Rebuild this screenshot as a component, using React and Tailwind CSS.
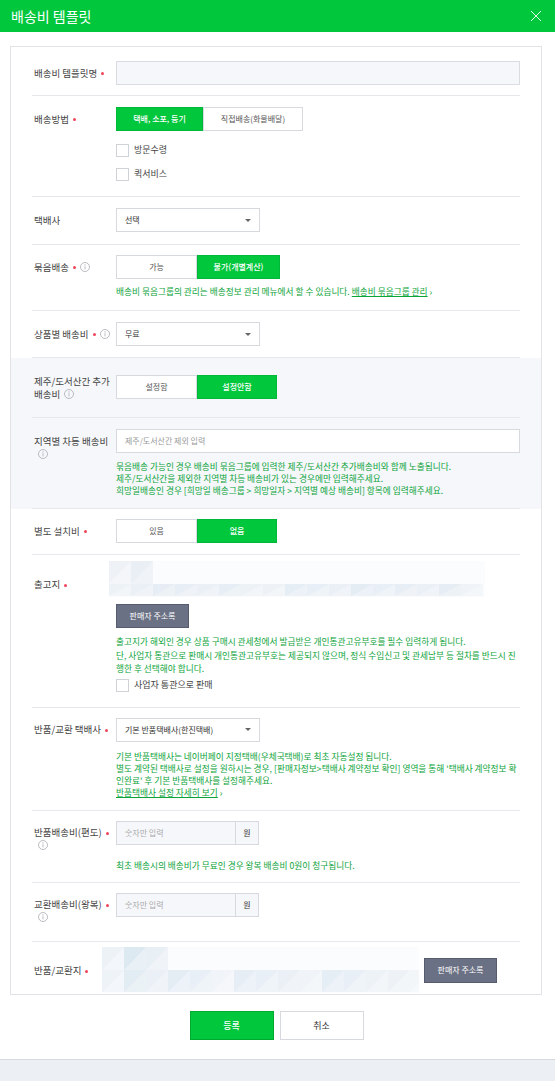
import React from 'react';

const FONT = { fontFamily: '"Noto Sans CJK KR", "Noto Sans", sans-serif' };

const Dot = () => (
  <span className="ml-[4px] inline-block h-[3px] w-[3px] rounded-full bg-[#f0445a] align-middle" />
);

const Info = () => (
  <svg width="10" height="10" viewBox="0 0 10 10" className="ml-[4px] inline-block align-[-1px]">
    <circle cx="5" cy="5" r="4.5" fill="none" stroke="#a9acb2" strokeWidth="0.8" />
    <rect x="4.6" y="4.2" width="0.8" height="3.2" fill="#a9acb2" />
    <circle cx="5" cy="2.9" r="0.55" fill="#a9acb2" />
  </svg>
);

const Row = ({ label, labelClass = 'pt-[5.5px]', className = '', border = true, children }) => (
  <div className={`flex ${border ? 'border-b border-[#e6e8eb]' : ''} ${className}`}>
    <div className={`w-[84px] shrink-0 pl-[2px] text-[9.5px] leading-[13px] text-[#444] ${labelClass}`}>{label}</div>
    <div className="min-w-0 flex-1">{children}</div>
  </div>
);

const Seg = ({ items, active, widths }) => (
  <div className="flex">
    {items.map((t, i) => (
      <div
        key={t}
        style={{ width: widths[i] }}
        className={
          i === active
            ? 'flex h-[24px] items-center justify-center border border-[#00b837] bg-[#00c73c] text-[8px] font-medium text-white'
            : 'flex h-[24px] items-center justify-center border border-[#d6d9de] bg-white text-[8px] text-[#555]'
        }
      >
        {t}
      </div>
    ))}
  </div>
);

const Select = ({ value }) => (
  <div className="flex h-[24px] w-[144px] items-center justify-between border border-[#d6d9de] bg-white pl-[8px] pr-[8px] text-[8px] text-[#333]">
    <span>{value}</span>
    <svg width="6" height="3" viewBox="0 0 6 3">
      <path d="M0 0H6L3 3Z" fill="#666" />
    </svg>
  </div>
);

const Check = ({ label }) => (
  <div className="flex items-center gap-[5px] text-[9px] text-[#444]">
    <span className="h-[13px] w-[13px] border border-[#cfd2d7] bg-white" />
    <span>{label}</span>
  </div>
);

const Note = ({ children, className = '' }) => (
  <div className={`text-[8.7px] leading-[12px] text-[#0ca43a] ${className}`}>{children}</div>
);

const Mosaic = ({ w, h, top, bottom, topH }) => (
  <svg width={w} height={h} viewBox={`0 0 ${w} ${h}`} className="block">
    <rect x="0" y="0" width={w} height={h} fill="#fbfcfd" />
    {top.map((c, i) => (
      <g key={'t' + i}>
        <rect x={i * 22} y="0" width="22" height={topH} fill={c} />
        <polygon points={`${i * 22},${topH} ${i * 22 + 22},0 ${i * 22 + 22},${topH}`} fill="#ffffff" opacity="0.35" />
      </g>
    ))}
    {bottom.map((c, i) => (
      <g key={'b' + i}>
        <rect x={i * 22} y={topH} width="22" height={h - topH - 1} fill={c} />
        <polygon points={`${i * 22},${h - 1} ${i * 22 + 22},${topH} ${i * 22 + 22},${h - 1}`} fill="#ffffff" opacity="0.3" />
      </g>
    ))}
  </svg>
);

const AddrBtn = () => (
  <div className="flex h-[25px] w-[73px] items-center justify-center border border-[#565c6c] bg-[#6b7184] text-[8px] text-white">
    판매자 주소록
  </div>
);

const MoneyInput = () => (
  <div className="flex">
    <div className="flex h-[24px] w-[120px] items-center border border-[#d6d9de] bg-[#f6f7fa] pl-[8px] text-[8px] text-[#aaa]">
      숫자만 입력
    </div>
    <div className="flex h-[24px] w-[23px] items-center justify-center border border-l-0 border-[#d6d9de] bg-[#f6f7fa] text-[8px] text-[#333]">
      원
    </div>
  </div>
);

export default function App() {
  return (
    <div className="relative min-h-[1081px] w-[555px] bg-white" style={FONT}>
      {/* header */}
      <div className="flex h-[32px] items-center justify-between bg-[#00c73c] pl-[11px] pr-[14px]">
        <span className="text-[14px] text-white">배송비 템플릿</span>
        <svg width="10" height="10" viewBox="0 0 10 10">
          <path d="M0 0L10 10M10 0L0 10" stroke="#fff" strokeWidth="0.9" />
        </svg>
      </div>

      {/* panel */}
      <div className="ml-[10px] mt-[14px] w-[532px] border border-[#e1e3e7]">
        <div className="px-[21px]">
          <Row label={<>배송비 템플릿명<Dot /></>} className="pt-[14px] pb-[10px]">
            <div className="h-[24px] border border-[#d9dce1] bg-[#f6f7fa]" />
          </Row>

          <Row label={<>배송방법<Dot /></>} className="pt-[11px] pb-[10px]">
            <Seg items={['택배, 소포, 등기', '직접배송(화물배달)']} active={0} widths={[87, 100]} />
            <div className="mt-[7px] flex h-[24px] items-center">
              <Check label="방문수령" />
            </div>
            <div className="flex h-[24px] items-center">
              <Check label="퀵서비스" />
            </div>
          </Row>

          <Row label="택배사" className="pt-[11px] pb-[12px]">
            <Select value="선택" />
          </Row>

          <Row label={<>묶음배송<Dot /><Info /></>} className="pt-[10px] pb-[12px]">
            <Seg items={['가능', '불가(개별계산)']} active={1} widths={[81, 83]} />
            <Note className="mt-[7px]">
              배송비 묶음그룹의 관리는 배송정보 관리 메뉴에서 할 수 있습니다.{' '}
              <span className="underline">배송비 묶음그룹 관리</span> ›
            </Note>
          </Row>

          <Row label={<>상품별 배송비<Dot /><Info /></>} className="pt-[11px] pb-[11px]">
            <Select value="무료" />
          </Row>
        </div>

        <div className="bg-[#f5f7fa] px-[21px]">
          <Row
            label={<>제주/도서산간 추가<br />배송비<Info /></>}
            labelClass="pt-[0px]"
            className="pt-[17px] pb-[16px]"
          >
            <Seg items={['설정함', '설정안함']} active={1} widths={[81, 80]} />
          </Row>

          <Row label={<>지역별 차등 배송비<br /><Info /></>} className="pt-[11px] pb-[11px]">
            <div className="flex h-[24px] items-center border border-[#d6d9de] bg-white pl-[8px] text-[8px] text-[#999]">
              제주/도서산간 제외 입력
            </div>
            <div className="mt-[8px]">
              <Note>묶음배송 가능인 경우 배송비 묶음그룹에 입력한 제주/도서산간 추가배송비와 함께 노출됩니다.</Note>
              <Note>제주/도서산간을 제외한 지역별 차등 배송비가 있는 경우에만 입력해주세요.</Note>
              <Note>희망일배송인 경우 [희망일 배송그룹 &gt; 희망일자 &gt; 지역별 예상 배송비] 항목에 입력해주세요.</Note>
            </div>
          </Row>
        </div>

        <div className="px-[21px]">
          <Row label={<>별도 설치비<Dot /></>} className="pt-[10px] pb-[11px]">
            <Seg items={['있음', '없음']} active={1} widths={[81, 80]} />
          </Row>

          <Row label={<>출고지<Dot /></>} labelClass="pt-[17px]" className="pt-[6px] pb-[12px]">
            <div className="ml-[-7px]">
              <Mosaic
                w={376}
                h={36}
                topH={23}
                top={['#eef2f7', '#e9eff5']}
                bottom={['#edf2f7', '#eaf0f6', '#e6edf4', '#e8eef5', '#eaf0f6', '#e7eef5', '#edf2f7', '#eef2f6', '#e5edf5', '#e8eff6', '#eaf0f6', '#e4ecf4', '#e9eff6', '#e8eef5', '#eaf0f6', '#e6edf4', '#f0f4f8']}
              />
            </div>
            <div className="mt-[7px] flex">
              <div className="flex h-[24px] w-[73px] items-center justify-center border border-[#565c6c] bg-[#6b7184] text-[8px] text-white">
                판매자 주소록
              </div>
            </div>
            <div className="mt-[7px]">
              <Note className="leading-[13.5px]">출고지가 해외인 경우 상품 구매시 관세청에서 발급받은 개인통관고유부호를 필수 입력하게 됩니다.</Note>
              <Note className="leading-[13.5px]">단, 사업자 통관으로 판매시 개인통관고유부호는 제공되지 않으며, 정식 수입신고 및 관세납부 등 절차를 반드시 진행한 후 선택해야 합니다.</Note>
            </div>
            <div className="flex h-[19px] items-center">
              <Check label="사업자 통관으로 판매" />
            </div>
          </Row>

          <Row label={<>반품/교환 택배사<Dot /></>} className="pt-[10px] pb-[11px]">
            <Select value="기본 반품택배사(한진택배)" />
            <div className="mt-[9px]">
              <Note className="leading-[12.5px]">기본 반품택배사는 네이버페이 지정택배(우체국택배)로 최초 자동설정 됩니다.</Note>
              <Note className="leading-[12.5px]">별도 계약된 택배사로 설정을 원하시는 경우, [판매자정보&gt;택배사 계약정보 확인] 영역을 통해 '택배사 계약정보 확인완료' 후 기본 반품택배사를 설정해주세요.</Note>
              <Note className="leading-[12.5px]"><span className="underline">반품택배사 설정 자세히 보기</span> ›</Note>
            </div>
          </Row>

          <Row label={<>반품배송비(편도)<Dot /><br /><Info /></>} className="pt-[10px] pb-[10px]">
            <MoneyInput />
            <Note className="mt-[15px]">최초 배송시의 배송비가 무료인 경우 왕복 배송비 0원이 청구됩니다.</Note>
          </Row>

          <Row label={<>교환배송비(왕복)<Dot /><br /><Info /></>} className="pt-[10px] pb-[17px]">
            <MoneyInput />
          </Row>

          <Row label={<>반품/교환지<Dot /></>} labelClass="pt-[17px]" border={false} className="pt-[5px] pb-[1px]">
            <div className="ml-[-14px] flex items-center gap-[5px]">
              <Mosaic
                w={317}
                h={46}
                topH={23}
                top={['#edf2f7', '#dde9f1', '#e8eff5']}
                bottom={['#eef3f8', '#e2ecf3', '#eaf0f6', '#e4ecf4', '#e9eff6', '#f1f4f8', '#e6edf5', '#e8eff6', '#eaf0f6', '#f0f4f8', '#e5edf5', '#e9eff6', '#edf2f7', '#eef2f7', '#f3f6f9']}
              />
              <AddrBtn />
            </div>
          </Row>
        </div>
      </div>

      {/* footer buttons */}
      <div className="mt-[16px] flex justify-center gap-[6px] pr-[2px]">
        <div className="flex h-[29px] w-[84px] items-center justify-center border border-[#00a932] bg-[#00c73c] text-[9px] font-medium text-white">
          등록
        </div>
        <div className="flex h-[29px] w-[84px] items-center justify-center border border-[#d6d9de] bg-white text-[9px] text-[#333]">
          취소
        </div>
      </div>

      <div className="absolute bottom-0 left-0 h-[22px] w-full border-t border-[#d6d9de] bg-[#eceff4]" />
    </div>
  );
}
